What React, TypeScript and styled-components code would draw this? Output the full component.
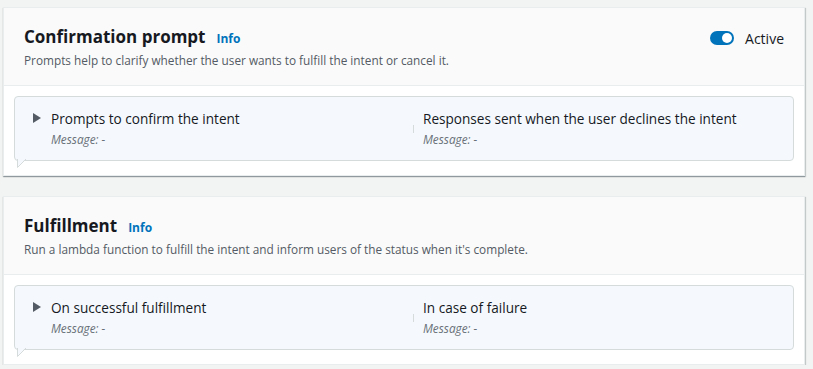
import React from 'react';
import styled, { createGlobalStyle } from 'styled-components';

const GlobalStyle = createGlobalStyle`
  html, body {
    margin: 0;
    padding: 0;
    background: #f2f3f3;
    font-family: "Open Sans", "Noto Sans", Arial, sans-serif;
    color: #16191f;
  }
`;

const Page = styled.div`
  padding: 7px 8px 0 3px;
  display: flex;
  flex-direction: column;
  gap: 20px;
`;

const Card = styled.section`
  background: #ffffff;
  border: 1px solid #eaeded;
  box-shadow: 0 1px 1px 0 rgba(0, 28, 36, 0.3), 1px 1px 1px 0 rgba(0, 28, 36, 0.15);
  padding-bottom: 14px;
`;

const Header = styled.header`
  background: #fafafa;
  border-bottom: 1px solid #eaeded;
  padding: 17px 20px 15px 20px;
  height: 45px;
`;

const TitleRow = styled.div`
  display: flex;
  justify-content: space-between;
  align-items: center;
  height: 26px;
`;

const Title = styled.h2`
  margin: 0;
  font-size: 17px;
  font-weight: 700;
  line-height: 26px;
  display: flex;
  align-items: baseline;
  gap: 11px;
`;

const InfoLink = styled.a`
  font-size: 12px;
  font-weight: 700;
  color: #0073bb;
  text-decoration: none;
`;

const Description = styled.p`
  margin: 0;
  font-size: 11.8px;
  line-height: 18px;
  color: #545b64;
`;

const ToggleLabel = styled.label`
  display: flex;
  align-items: center;
  gap: 11px;
  font-size: 14px;
  color: #16191f;
`;

const Track = styled.span<{ $on: boolean }>`
  position: relative;
  width: 24px;
  height: 14px;
  border-radius: 7px;
  background: ${p => (p.$on ? '#0073bb' : '#aab7b8')};
  &::after {
    content: '';
    position: absolute;
    top: 2px;
    left: ${p => (p.$on ? '12px' : '2px')};
    width: 10px;
    height: 10px;
    border-radius: 50%;
    background: #ffffff;
  }
`;

const Bubble = styled.div`
  position: relative;
  margin: 10px 10px 0 10px;
  background: #f5f9fd;
  border: 1px solid #d5dbdb;
  border-radius: 4px;
  padding: 12px 18px 12px 18px;
  display: flex;
  align-items: flex-start;
  gap: 10px;
`;

const Tail = styled.svg`
  position: absolute;
  left: 1px;
  bottom: -9px;
`;

const Caret = styled.span`
  width: 0;
  height: 0;
  margin-top: 4px;
  border-top: 5px solid transparent;
  border-bottom: 5px solid transparent;
  border-left: 8px solid #545b64;
`;

const Columns = styled.div`
  flex: 1;
  display: grid;
  grid-template-columns: 1fr 1fr;
`;

const Column = styled.div<{ $divided?: boolean }>`
  position: relative;
  padding-left: ${p => (p.$divided ? '10px' : '0')};
  &::before {
    content: ${p => (p.$divided ? "''" : 'none')};
    position: absolute;
    left: 0;
    top: 16px;
    width: 1px;
    height: 8px;
    background: #d5dbdb;
  }
`;

const RowTitle = styled.div`
  font-size: 13.6px;
  line-height: 20px;
`;

const Message = styled.div`
  font-size: 11.8px;
  line-height: 18px;
  font-style: italic;
  color: #687078;
  margin-top: 1px;
`;

interface Section {
  title: string;
  description: string;
  left: string;
  right: string;
  toggle?: boolean;
}

const sections: Section[] = [
  {
    title: 'Confirmation prompt',
    description: 'Prompts help to clarify whether the user wants to fulfill the intent or cancel it.',
    left: 'Prompts to confirm the intent',
    right: 'Responses sent when the user declines the intent',
    toggle: true,
  },
  {
    title: 'Fulfillment',
    description: "Run a lambda function to fulfill the intent and inform users of the status when it's complete.",
    left: 'On successful fulfillment',
    right: 'In case of failure',
  },
];

const App: React.FC = () => (
  <>
    <GlobalStyle />
    <Page>
      {sections.map(s => (
        <Card key={s.title}>
          <Header>
            <TitleRow>
              <Title>
                {s.title}
                <InfoLink href="#">Info</InfoLink>
              </Title>
              {s.toggle && (
                <ToggleLabel>
                  <Track $on />
                  Active
                </ToggleLabel>
              )}
            </TitleRow>
            <Description>{s.description}</Description>
          </Header>
          <Bubble>
            <Caret />
            <Columns>
              <Column>
                <RowTitle>{s.left}</RowTitle>
                <Message>Message: -</Message>
              </Column>
              <Column $divided>
                <RowTitle>{s.right}</RowTitle>
                <Message>Message: -</Message>
              </Column>
            </Columns>
            <Tail width="12" height="10" viewBox="0 0 12 10">
              <path d="M1 0 L1 8.5 L9.5 0 Z" fill="#f5f9fd" />
              <path d="M1.5 0 L1.5 8.5 L10 0" fill="none" stroke="#d5dbdb" strokeWidth="1" />
            </Tail>
          </Bubble>
        </Card>
      ))}
    </Page>
  </>
);

export default App;
